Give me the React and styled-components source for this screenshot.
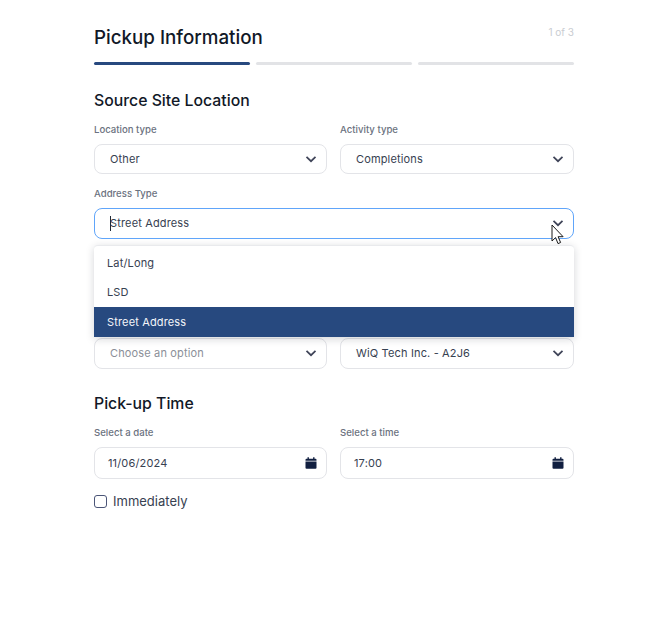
import React from "react";
import styled, { createGlobalStyle } from "styled-components";

const GlobalStyle = createGlobalStyle`
  html, body {
    margin: 0;
    padding: 0;
    background: #fff;
  }
  body {
    font-family: Inter, "Liberation Sans", sans-serif;
  }
`;

const Page = styled.div`
  width: 480px;
  height: 633px;
  margin-left: 94px;
  padding-top: 24px;
  box-sizing: border-box;
`;

const Header = styled.div`
  display: flex;
  justify-content: space-between;
  align-items: flex-start;
  height: 38px;
`;

const Title = styled.h1`
  margin: 0;
  font-size: 18.75px;
  line-height: 28px;
  font-weight: 500;
  color: #111827;
`;

const StepCount = styled.span`
  font-size: 10px;
  line-height: 16px;
  color: #c9ccd1;
`;

const Progress = styled.div`
  display: flex;
  gap: 6px;
`;

const Step = styled.div`
  flex: 1;
  height: 3px;
  border-radius: 2px;
  background: ${(p) => (p.$active ? "#27497f" : "#e2e3e6")};
`;

const SectionTitle = styled.h2`
  margin: ${(p) => p.$top}px 0 0;
  font-size: 15.8px;
  line-height: 22px;
  font-weight: 500;
  color: #111827;
`;

const Row = styled.div`
  display: grid;
  grid-template-columns: 233px 234px;
  column-gap: 13px;
  margin-top: ${(p) => p.$top}px;
`;

const Field = styled.div`
  display: flex;
  flex-direction: column;
`;

const Label = styled.label`
  padding-top: 1px;
  margin-bottom: 7px;
  font-size: 9.6px;
  line-height: 14px;
  font-weight: 500;
  color: #6b7280;
`;

const Control = styled.div`
  display: flex;
  align-items: center;
  justify-content: space-between;
  box-sizing: border-box;
  height: ${(p) => p.$height || 30}px;
  padding: 0 9px ${(p) => (p.$height === 31 ? 1 : 0)}px ${(p) => p.$left || 15}px;
  border: 1px solid ${(p) => (p.$focused ? "#60a5fa" : "#e3e4e8")};
  border-radius: 8px;
  background: #fff;
  font-size: 11px;
  letter-spacing: 0.15px;
  color: ${(p) => (p.$muted ? "#8b8f98" : "#374151")};
`;

const ControlText = styled.span`
  display: inline-flex;
  align-items: center;
`;

const Caret = styled.span`
  width: 1px;
  height: 15px;
  margin-right: -1px;
  background: #1f2937;
`;

const AddressArea = styled.div`
  position: relative;
  padding-top: 12px;
`;

const Menu = styled.ul`
  position: absolute;
  top: 71px;
  left: 0;
  right: 0;
  z-index: 5;
  margin: 0;
  padding: 3px 0 0;
  list-style: none;
  background: #fff;
  border-top: 1px solid #e9eaed;
  border-radius: 4px 4px 0 0;
  box-shadow: 0 2px 8px rgba(17, 24, 39, 0.18);
`;

const MenuItem = styled.li`
  display: flex;
  align-items: center;
  box-sizing: border-box;
  height: ${(p) => (p.$selected ? 30 : 29)}px;
  padding: 0 0 ${(p) => (p.$selected ? 0 : 1)}px 13px;
  font-size: 11px;
  letter-spacing: 0.15px;
  color: ${(p) => (p.$selected ? "#f3f5f9" : "#374151")};
  background: ${(p) => (p.$selected ? "#27497f" : "transparent")};
`;

const Pointer = styled.svg`
  position: absolute;
  top: 50px;
  right: 10px;
  z-index: 6;
  width: 13px;
  height: 21px;
`;

const CheckRow = styled.label`
  display: flex;
  align-items: center;
  gap: 6px;
  margin-top: 14px;
  font-size: 13px;
  line-height: 16px;
  color: #374151;
`;

const CheckBox = styled.span`
  box-sizing: border-box;
  width: 13px;
  height: 13px;
  border: 1px solid #4b5577;
  border-radius: 3px;
  background: #fff;
`;

const Chevron = () => (
  <svg width="12" height="12" viewBox="0 0 12 12" fill="none">
    <path d="M1.5 3.8 6 8.2l4.5-4.4" stroke="#3f4458" strokeWidth="1.7" />
  </svg>
);

const CalendarIcon = () => (
  <svg width="12" height="12" viewBox="0 0 12 12" fill="#111f40">
    <path d="M0.5 4.6h11v6.2a1 1 0 0 1-1 1h-9a1 1 0 0 1-1-1z" />
    <path d="M0.5 3.8V2.8a1 1 0 0 1 1-1h1V0.3h1.4v1.5h4.2V0.3h1.4v1.5h1a1 1 0 0 1 1 1v1z" />
  </svg>
);

const SelectField = ({ label, value, muted }) => (
  <Field>
    <Label>{label}</Label>
    <Control $muted={muted}>
      <span>{value}</span>
      <Chevron />
    </Control>
  </Field>
);

const PickerField = ({ label, value }) => (
  <Field>
    <Label>{label}</Label>
    <Control $height={32} $left={13}>
      <span>{value}</span>
      <CalendarIcon />
    </Control>
  </Field>
);

const App = () => {
  return (
    <>
      <GlobalStyle />
      <Page>
        <Header>
          <Title>Pickup Information</Title>
          <StepCount>1 of 3</StepCount>
        </Header>
        <Progress>
          <Step $active />
          <Step />
          <Step />
        </Progress>

        <SectionTitle $top={25}>Source Site Location</SectionTitle>
        <Row $top={10}>
          <SelectField label="Location type" value="Other" />
          <SelectField label="Activity type" value="Completions" />
        </Row>

        <AddressArea>
          <Field>
            <Label>Address Type</Label>
            <Control $focused $height={31}>
              <ControlText>
                <Caret />
                Street Address
              </ControlText>
              <Chevron />
            </Control>
          </Field>
          <Pointer viewBox="0 0 13 21">
            <path
              d="M1 1v16l3.6-3.4 2.4 6 2.6-1.1-2.5-5.8h5z"
              fill="#fff"
              stroke="#1a1a1a"
              strokeWidth="1"
            />
          </Pointer>
          <Menu>
            <MenuItem>Lat/Long</MenuItem>
            <MenuItem>LSD</MenuItem>
            <MenuItem $selected>Street Address</MenuItem>
          </Menu>
          <Row $top={99}>
            <Control $muted $height={31}>
              <span>Choose an option</span>
              <Chevron />
            </Control>
            <Control $height={31}>
              <span>WiQ Tech Inc. - A2J6</span>
              <Chevron />
            </Control>
          </Row>
        </AddressArea>

        <SectionTitle $top={24}>Pick-up Time</SectionTitle>
        <Row $top={10}>
          <PickerField label="Select a date" value="11/06/2024" />
          <PickerField label="Select a time" value="17:00" />
        </Row>
        <CheckRow>
          <CheckBox />
          Immediately
        </CheckRow>
      </Page>
    </>
  );
};

export default App;
